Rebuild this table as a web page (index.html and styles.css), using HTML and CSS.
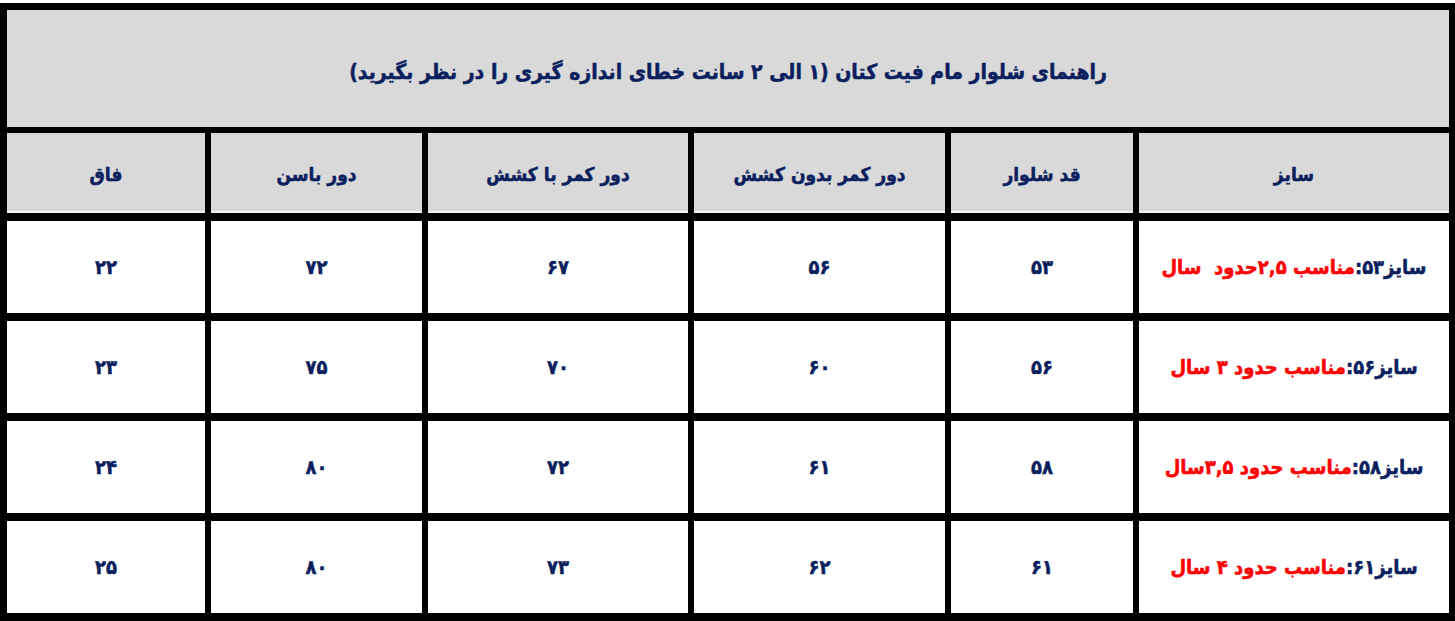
FILE: index.html
```html
<!DOCTYPE html>
<html lang="fa" dir="rtl">
<head>
<meta charset="utf-8">
<title>راهنمای سایز شلوار</title>
<link rel="stylesheet" href="styles.css">
</head>
<body>
<div class="sheet">
  <div class="title">راهنمای شلوار مام فیت کتان (۱ الی ۲ سانت خطای اندازه گیری را در نظر بگیرید)</div>
  <div class="grid">
    <div class="cell head">سایز</div>
    <div class="cell head">قد شلوار</div>
    <div class="cell head">دور کمر بدون کشش</div>
    <div class="cell head">دور کمر با کشش</div>
    <div class="cell head">دور باسن</div>
    <div class="cell head">فاق</div>

    <div class="cell size"><span class="lbl">سایز۵۳:</span><span class="red">مناسب ۲,۵حدود&nbsp; سال</span></div>
    <div class="cell num">۵۳</div>
    <div class="cell num">۵۶</div>
    <div class="cell num">۶۷</div>
    <div class="cell num">۷۲</div>
    <div class="cell num">۲۲</div>

    <div class="cell size"><span class="lbl">سایز۵۶:</span><span class="red">مناسب حدود ۳ سال</span></div>
    <div class="cell num">۵۶</div>
    <div class="cell num">۶۰</div>
    <div class="cell num">۷۰</div>
    <div class="cell num">۷۵</div>
    <div class="cell num">۲۳</div>

    <div class="cell size"><span class="lbl">سایز۵۸:</span><span class="red">مناسب حدود ۳,۵سال</span></div>
    <div class="cell num">۵۸</div>
    <div class="cell num">۶۱</div>
    <div class="cell num">۷۲</div>
    <div class="cell num">۸۰</div>
    <div class="cell num">۲۴</div>

    <div class="cell size"><span class="lbl">سایز۶۱:</span><span class="red">مناسب حدود ۴ سال</span></div>
    <div class="cell num">۶۱</div>
    <div class="cell num">۶۲</div>
    <div class="cell num">۷۳</div>
    <div class="cell num">۸۰</div>
    <div class="cell num">۲۵</div>
  </div>
</div>
</body>
</html>
```
FILE: styles.css
```css
html, body {
  margin: 0;
  padding: 0;
  background: #ffffff;
}
body {
  font-family: "DejaVu Sans Condensed", "DejaVu Sans", sans-serif;
  font-stretch: condensed;
  font-weight: bold;
  color: #0b1f5e;
  -webkit-text-stroke: 0.5px currentColor;
}
.sheet {
  margin-top: 3px;
  width: 1455px;
  height: 618px;
  box-sizing: border-box;
  background: #000000;
  padding: 7px 6px 8px 7px;
  display: flex;
  flex-direction: column;
}
.title {
  height: 117px;
  margin-bottom: 6px;
  background: #d9d9d9;
  display: flex;
  align-items: center;
  justify-content: center;
  font-size: 21px;
  padding-top: 6px;
  box-sizing: border-box;
}
.grid {
  display: grid;
  grid-template-columns: 310px 182px 251px 260px 211px 198px;
  grid-template-rows: 80px 92px 92px 92px 92px;
  column-gap: 6px;
  row-gap: 8px;
}
.cell {
  display: flex;
  align-items: center;
  justify-content: center;
  background: #ffffff;
  white-space: nowrap;
}
.head {
  background: #d9d9d9;
  box-shadow: inset 0 -2px 0 #f4f4f4;
  font-size: 19px;
  padding-top: 2px;
  box-sizing: border-box;
}
.num {
  font-size: 20px;
}
.size {
  font-size: 20px;
}
.red {
  color: #ff0000;
}
```
